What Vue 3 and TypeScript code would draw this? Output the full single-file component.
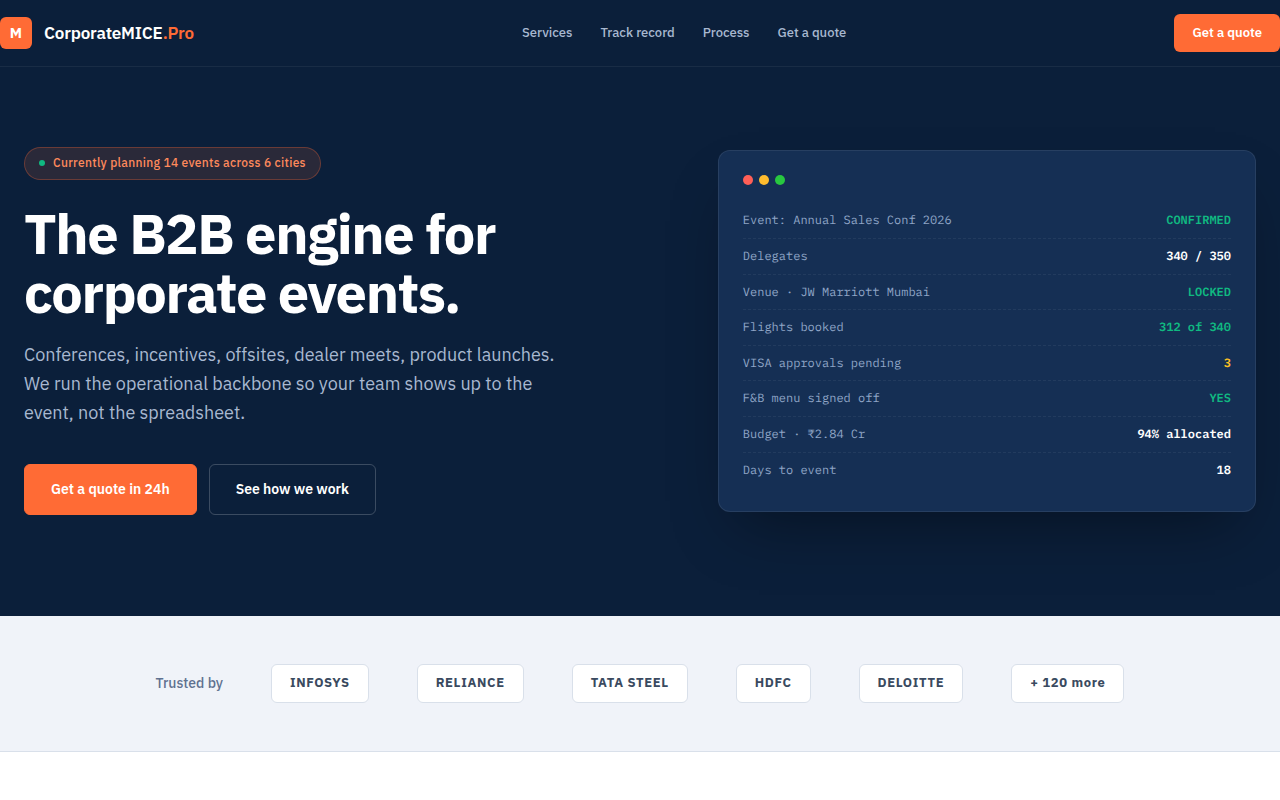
<script setup lang="ts">
type Tone = 'ok' | 'warn' | 'plain'

interface StatusRow {
  label: string
  value: string
  tone: Tone
}

const links: string[] = ['Services', 'Track record', 'Process', 'Get a quote']

const rows: StatusRow[] = [
  { label: 'Event: Annual Sales Conf 2026', value: 'CONFIRMED', tone: 'ok' },
  { label: 'Delegates', value: '340 / 350', tone: 'plain' },
  { label: 'Venue · JW Marriott Mumbai', value: 'LOCKED', tone: 'ok' },
  { label: 'Flights booked', value: '312 of 340', tone: 'ok' },
  { label: 'VISA approvals pending', value: '3', tone: 'warn' },
  { label: 'F&B menu signed off', value: 'YES', tone: 'ok' },
  { label: 'Budget · ₹2.84 Cr', value: '94% allocated', tone: 'plain' },
  { label: 'Days to event', value: '18', tone: 'plain' },
]

const clients: string[] = ['INFOSYS', 'RELIANCE', 'TATA STEEL', 'HDFC', 'DELOITTE', '+ 120 more']
</script>

<template>
  <div class="page">
    <header class="nav">
      <a class="brand">
        <span class="mark">M</span>
        <span class="name">CorporateMICE<span class="accent">.Pro</span></span>
      </a>
      <nav class="links">
        <a v-for="link in links" :key="link">{{ link }}</a>
      </nav>
      <a class="cta">Get a quote</a>
    </header>

    <section class="hero">
      <div class="copy">
        <div class="badge"><span class="pulse"></span>Currently planning 14 events across 6 cities</div>
        <h1>The B2B engine for<br />corporate events.</h1>
        <p>
          Conferences, incentives, offsites, dealer meets, product launches. We run the operational
          backbone so your team shows up to the event, not the spreadsheet.
        </p>
        <div class="actions">
          <a class="btn primary">Get a quote in 24h</a>
          <a class="btn ghost">See how we work</a>
        </div>
      </div>

      <div class="panel">
        <div class="dots">
          <span class="dot red"></span><span class="dot amber"></span><span class="dot green"></span>
        </div>
        <div v-for="row in rows" :key="row.label" class="row">
          <span class="label">{{ row.label }}</span>
          <span class="value" :class="row.tone">{{ row.value }}</span>
        </div>
      </div>
    </section>

    <section class="trust">
      <span class="trust-label">Trusted by</span>
      <span v-for="client in clients" :key="client" class="client">{{ client }}</span>
    </section>
  </div>
</template>

<style>
body {
  margin: 0;
  background: #ffffff;
}
</style>

<style scoped>
.page {
  font-family: "IBM Plex Sans", "Open Sans", sans-serif;
  line-height: 1.55;
  color: #0b1f3a;
}

.page * {
  box-sizing: border-box;
}

.nav {
  display: flex;
  align-items: center;
  justify-content: space-between;
  padding: 14px 0;
  background: #0b1f3a;
  border-bottom: 1px solid rgba(255, 255, 255, 0.06);
}

.brand {
  display: flex;
  align-items: center;
  gap: 12px;
  color: #ffffff;
}

.mark {
  display: grid;
  place-items: center;
  width: 32px;
  height: 32px;
  border-radius: 6px;
  background: #ff6b35;
  font-size: 15px;
  font-weight: 700;
}

.name {
  font-size: 17px;
  font-weight: 600;
  letter-spacing: -0.01em;
}

.accent {
  color: #ff6b35;
}

.links {
  display: flex;
  gap: 28px;
  font-size: 13px;
  font-weight: 500;
  color: #a8b8d0;
}

.cta {
  padding: 9px 18px;
  border-radius: 6px;
  background: #ff6b35;
  color: #ffffff;
  font-size: 13px;
  font-weight: 600;
}

.hero {
  display: grid;
  grid-template-columns: 1.2fr 1fr;
  gap: 48px;
  align-items: center;
  padding: 80px 24px 100.55px;
  background: #0b1f3a;
}

.badge {
  display: inline-flex;
  align-items: center;
  gap: 8px;
  padding: 6px 14px;
  border: 1px solid rgba(255, 107, 53, 0.3);
  border-radius: 100px;
  background: rgba(255, 107, 53, 0.13);
  color: #ff8a5c;
  font-size: 12px;
  font-weight: 500;
  letter-spacing: 0.026em;
}

.pulse {
  width: 6px;
  height: 6px;
  border-radius: 50%;
  background: #10b981;
}

h1 {
  margin: 24px 0 20px;
  color: #ffffff;
  font-size: 56px;
  font-weight: 700;
  line-height: 1.05;
  letter-spacing: -0.025em;
}

p {
  max-width: 540px;
  margin: 0 0 36px;
  color: #a8b8d0;
  font-size: 18px;
  line-height: 1.6;
}

.actions {
  display: flex;
  gap: 12px;
}

.btn {
  padding: 14px 26px;
  border: 1px solid #ff6b35;
  border-radius: 6px;
  color: #ffffff;
  font-size: 14px;
  font-weight: 600;
}

.primary {
  background: #ff6b35;
}

.ghost {
  border-color: rgba(255, 255, 255, 0.2);
}

.panel {
  padding: 24px;
  border: 1px solid rgba(255, 255, 255, 0.08);
  border-radius: 12px;
  background: #152f54;
  box-shadow: 0 30px 60px -20px rgba(0, 0, 0, 0.4);
  font-family: "IBM Plex Mono", "Liberation Mono", monospace;
  font-size: 12px;
  text-rendering: geometricPrecision;
}

.dots {
  display: flex;
  gap: 6px;
  margin-bottom: 18px;
}

.dot {
  width: 10px;
  height: 10px;
  border-radius: 50%;
}

.red {
  background: #ff5f57;
}

.amber {
  background: #febc2e;
}

.green {
  background: #28c840;
}

.row {
  display: flex;
  justify-content: space-between;
  padding: 9px 0 7px;
  border-bottom: 1px dashed rgba(255, 255, 255, 0.06);
}

.row:last-child {
  border-bottom: 0;
}

.label {
  color: #8fa5c6;
}

.value {
  font-weight: 600;
}

.ok {
  color: #10b981;
}

.warn {
  color: #fbbf24;
}

.plain {
  color: #ffffff;
}

.trust {
  display: flex;
  align-items: center;
  justify-content: center;
  gap: 48px;
  height: 136px;
  border-bottom: 1px solid #d9e0ea;
  background: #f0f3f9;
}

.trust-label {
  color: #5f7190;
  font-size: 14px;
  font-weight: 500;
}

.client {
  padding: 8px 18px;
  border: 1px solid #d9e0ea;
  border-radius: 6px;
  background: #ffffff;
  color: #3a4a60;
  font-size: 13px;
  font-weight: 700;
  letter-spacing: 0.05em;
}
</style>
